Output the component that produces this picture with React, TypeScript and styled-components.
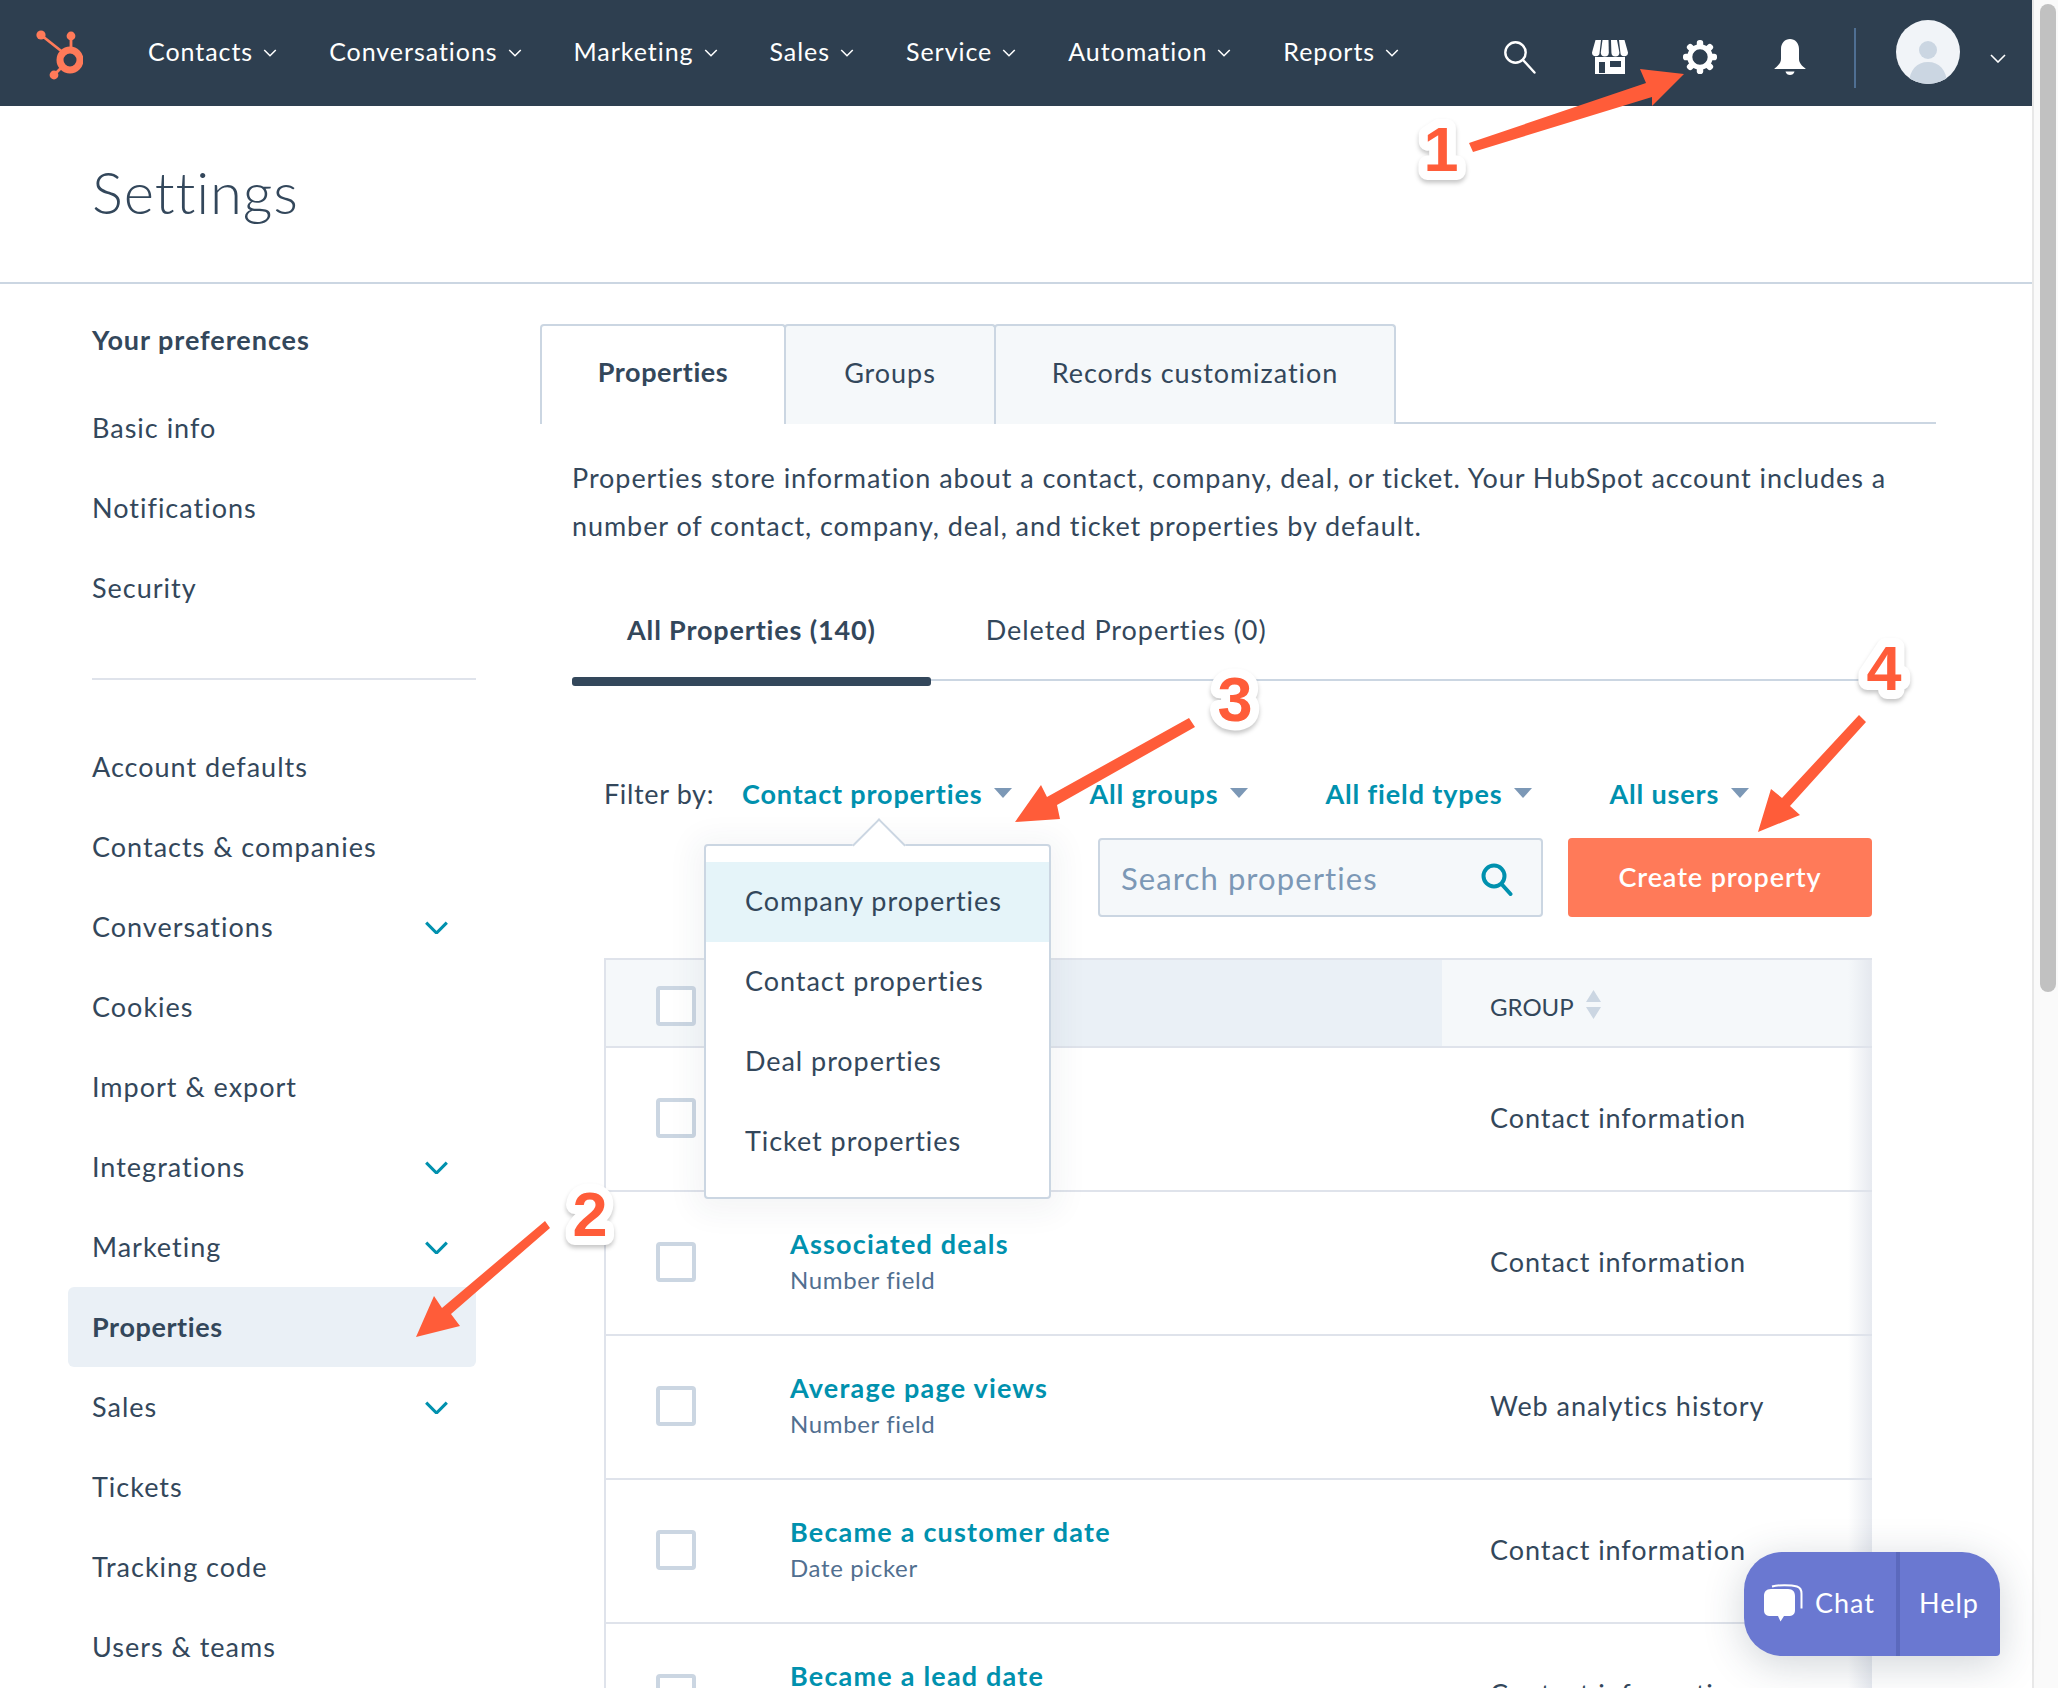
import { createGlobalStyle, styled } from 'styled-components';

const FONT = `Lato, "Noto Sans", "Liberation Sans", sans-serif`;
const INK = '#33475b';
const TEAL = '#0091ae';
const LINE = '#cbd6e2';
const SOFT_LINE = '#dfe3eb';

const GlobalStyle = createGlobalStyle`
  html, body { margin: 0; padding: 0; background: #fff; }
  body { font-family: ${FONT}; color: ${INK}; font-size: 27px; letter-spacing: 0.95px; }
  * { box-sizing: border-box; }
`;

const Page = styled.div`
  position: relative;
  display: flex;
  width: 2058px;
  height: 1688px;
  overflow: hidden;
`;

const Main = styled.div`
  flex: 0 0 2032px;
  display: flex;
  flex-direction: column;
`;

const ScrollTrack = styled.div`
  flex: 1;
  background: #fafafa;
  border-left: 2px solid #e8e8e8;
  padding: 4px 2px 0 6px;
`;

const ScrollThumb = styled.div`
  height: 988px;
  border-radius: 8px;
  background: #c1c1c1;
`;

const TopBar = styled.header`
  flex: 0 0 106px;
  display: flex;
  align-items: center;
  padding: 0 26px 0 36px;
  background: #2e3f50;
  color: #fff;
`;

const Logo = styled.svg`
  flex: none;
  width: 47px;
  height: 50px;
  margin: 4px 65px 0 0;
`;

const TopLinks = styled.nav`
  display: flex;
  gap: 52px;
  margin-bottom: 5px;
`;

const TopLink = styled.a`
  display: flex;
  align-items: center;
  gap: 10px;
  font-size: 25px;
  letter-spacing: 0.95px;
  svg {
    margin-top: 5px;
  }
`;

const TopRight = styled.div`
  display: flex;
  align-items: center;
  margin-left: auto;
`;

const IconSlot = styled.div`
  width: 90px;
  display: flex;
  justify-content: center;
  margin-top: 8px;
`;

const TopDivider = styled.div`
  width: 2px;
  height: 60px;
  margin: 10px 40px 0 19px;
  background: #4f6f93;
`;

const Avatar = styled.svg`
  width: 64px;
  height: 64px;
  margin-bottom: 2px;
`;

const AvatarCaret = styled.svg`
  width: 16px;
  height: 9px;
  margin: 10px 0 0 30px;
`;

const TitleBar = styled.div`
  flex: 0 0 178px;
  display: flex;
  align-items: center;
  padding: 0 0 5px 92px;
  border-bottom: 2px solid ${LINE};
`;

const Title = styled.h1`
  margin: 0;
  font-size: 58px;
  font-weight: 300;
  letter-spacing: 0.9px;
`;

const Body = styled.div`
  flex: 1;
  display: flex;
  min-height: 0;
`;

const Sidebar = styled.aside`
  flex: 0 0 540px;
  padding: 16px 64px 0 68px;
`;

const SideHeading = styled.div`
  height: 80px;
  line-height: 80px;
  padding-left: 24px;
  font-weight: 700;
  margin-bottom: 8px;
`;

const SideItem = styled.div<{ $active?: boolean }>`
  display: flex;
  align-items: center;
  justify-content: space-between;
  height: 80px;
  padding: 0 27px 1px 24px;
  border-radius: 6px;
  background: ${p => (p.$active ? '#eaf0f6' : 'transparent')};
  font-weight: ${p => (p.$active ? 700 : 400)};
  letter-spacing: ${p => (p.$active ? 0.6 : 1)}px;
  svg {
    margin-top: 2px;
  }
`;

const SideRule = styled.div`
  height: 2px;
  margin: 50px 0 47px 24px;
  background: ${SOFT_LINE};
`;

const Content = styled.main`
  flex: 0 0 1396px;
  padding-top: 40px;
`;

const Tabs = styled.div`
  display: flex;
  height: 100px;
  border-bottom: 2px solid ${LINE};
`;

const Tab = styled.div<{ $active?: boolean; $width: number }>`
  width: ${p => p.$width}px;
  height: 100px;
  display: flex;
  align-items: center;
  justify-content: center;
  padding-bottom: ${p => (p.$active ? 7 : 6)}px;
  margin-right: -2px;
  border: 2px solid ${LINE};
  border-bottom: 0;
  border-radius: 4px 4px 0 0;
  background: ${p => (p.$active ? '#fff' : '#f5f8fa')};
  font-weight: ${p => (p.$active ? 700 : 400)};
  letter-spacing: ${p => (p.$active ? 0.6 : 0.95)}px;
  position: relative;
  z-index: ${p => (p.$active ? 1 : 0)};
`;

const Panel = styled.div`
  padding: 30px 0 0 32px;
`;

const Intro = styled.p`
  margin: 0;
  line-height: 48px;
  width: 1340px;
  letter-spacing: 0.93px;
`;

const SubTabs = styled.div`
  display: flex;
  margin: 40px 32px 0 0;
  height: 91px;
  border-bottom: 2px solid ${LINE};
`;

const SubTab = styled.div<{ $active?: boolean }>`
  position: relative;
  height: 91px;
  line-height: 48px;
  padding: 16px 55px 0;
  font-weight: ${p => (p.$active ? 700 : 400)};
  letter-spacing: ${p => (p.$active ? 0.85 : 0.95)}px;
  &::after {
    content: '';
    display: ${p => (p.$active ? 'block' : 'none')};
    position: absolute;
    left: 0;
    right: 0;
    bottom: -5px;
    height: 9px;
    border-radius: 3px;
    background: #33475b;
  }
`;

const Filters = styled.div`
  display: flex;
  align-items: center;
  gap: 77px;
  height: 48px;
  margin: 88px 0 0 32px;
`;

const FilterLabel = styled.span`
  margin-right: -49px;
  letter-spacing: 0.65px;
`;

const FilterButton = styled.span`
  display: flex;
  align-items: center;
  gap: 12px;
  color: ${TEAL};
  font-weight: 700;
  letter-spacing: 0.85px;
`;

const Caret = styled.i`
  width: 0;
  height: 0;
  border-left: 9px solid transparent;
  border-right: 9px solid transparent;
  border-top: 10px solid #7c98b6;
`;

const Actions = styled.div`
  display: flex;
  justify-content: flex-end;
  gap: 25px;
  margin: 21px 64px 0 0;
`;

const SearchBox = styled.div`
  width: 445px;
  height: 79px;
  display: flex;
  align-items: center;
  justify-content: space-between;
  padding: 0 28px 0 21px;
  border: 2px solid ${LINE};
  border-radius: 4px;
  background: #f5f8fa;
  color: #7c98b6;
  font-size: 31px;
  letter-spacing: 1.1px;
  svg {
    margin-top: 3px;
  }
`;

const CreateButton = styled.button`
  width: 304px;
  height: 79px;
  padding: 0 0 3px;
  border: 0;
  border-radius: 4px;
  background: #ff7a59;
  color: #fff;
  font: 600 27px ${FONT};
  letter-spacing: 0.9px;
`;

const Table = styled.div`
  position: relative;
  margin: 41px 64px 0 32px;
  border-left: 2px solid ${SOFT_LINE};
  border-top: 2px solid ${SOFT_LINE};
  &::after {
    content: '';
    position: absolute;
    top: 0;
    bottom: 0;
    right: 0;
    width: 24px;
    background: linear-gradient(to right, rgba(223, 227, 235, 0), rgba(223, 227, 235, 0.75));
  }
`;

const Row = styled.div<{ $header?: boolean }>`
  display: grid;
  grid-template-columns: 164px 672px 429px;
  height: ${p => (p.$header ? 88 : 144)}px;
  border-bottom: 2px solid ${SOFT_LINE};
`;

const CheckCell = styled.div<{ $header?: boolean }>`
  display: flex;
  align-items: center;
  padding: ${p => (p.$header ? '5px 0 0' : '0 0 2px')} 50px;
  background: ${p => (p.$header ? '#f5f8fa' : 'transparent')};
`;

const Checkbox = styled.div`
  width: 40px;
  height: 40px;
  border: 4px solid ${LINE};
  border-radius: 4px;
  background: #fff;
`;

const NameHead = styled.div`
  background: #eaf0f6;
`;

const NameCell = styled.div`
  display: flex;
  flex-direction: column;
  justify-content: center;
  padding: 0 0 4px 20px;
`;

const PropName = styled.a`
  line-height: 36px;
  color: ${TEAL};
  font-weight: 700;
  letter-spacing: 1.2px;
`;

const PropType = styled.span`
  line-height: 35px;
  font-size: 24px;
  letter-spacing: 0.65px;
  color: #516f90;
`;

const GroupHead = styled.div`
  display: flex;
  align-items: center;
  gap: 12px;
  padding: 7px 0 0 48px;
  background: #f5f8fa;
  font-size: 24px;
  letter-spacing: 0;
`;

const GroupCell = styled.div`
  display: flex;
  align-items: center;
  padding: 0 0 3px 48px;
`;

const SortArrows = styled.svg`
  width: 15px;
  height: 29px;
  margin-bottom: 4px;
`;

const Dropdown = styled.div`
  position: absolute;
  z-index: 5;
  left: 704px;
  top: 844px;
  width: 347px;
  height: 355px;
  padding-top: 16px;
  border: 2px solid ${LINE};
  border-radius: 4px;
  background: #fff;
  box-shadow: 0 4px 30px 10px rgba(45, 62, 80, 0.05);
  &::before {
    content: '';
    position: absolute;
    left: 154px;
    top: -20px;
    width: 36px;
    height: 36px;
    transform: rotate(45deg);
    background: #fff;
    border-top: 2px solid ${LINE};
    border-left: 2px solid ${LINE};
  }
`;

const DropdownItem = styled.div<{ $active?: boolean }>`
  position: relative;
  display: flex;
  align-items: center;
  height: 80px;
  padding: 0 0 3px 39px;
  background: ${p => (p.$active ? '#e5f4f9' : 'transparent')};
`;

const ChatWidget = styled.div`
  position: absolute;
  z-index: 6;
  left: 1744px;
  top: 1552px;
  width: 256px;
  height: 104px;
  display: flex;
  border-radius: 38px 38px 4px 38px;
  background: #6a78d1;
  color: #fff;
  box-shadow: 0 8px 40px rgba(45, 62, 80, 0.22);
  font-size: 27px;
  letter-spacing: 1px;
`;

const ChatPart = styled.div`
  flex: 0 0 152px;
  display: flex;
  align-items: center;
  gap: 12px;
  padding: 0 0 3px 20px;
`;

const HelpPart = styled.div`
  flex: 1;
  display: flex;
  align-items: center;
  padding: 0 0 3px 19px;
  border-left: 4px solid #5b69bd;
`;

const ChatIcon = styled.svg`
  width: 39px;
  height: 38px;
`;

const Annotations = styled.svg`
  position: absolute;
  z-index: 10;
  left: 0;
  top: 0;
  width: 2058px;
  height: 1688px;
  pointer-events: none;
`;

const StepNumber = styled.text`
  font: 700 63px 'Liberation Sans', Arial, sans-serif;
  letter-spacing: 0;
  fill: #ff5c39;
  stroke: #fff;
  stroke-width: 18px;
  stroke-linejoin: round;
  paint-order: stroke fill;
  text-anchor: middle;
  filter: drop-shadow(0 3px 2px rgba(0, 0, 0, 0.22));
`;

const topLinks = ['Contacts', 'Conversations', 'Marketing', 'Sales', 'Service', 'Automation', 'Reports'];
const prefs = ['Basic info', 'Notifications', 'Security'];
const account: [string, boolean?][] = [
  ['Account defaults'],
  ['Contacts & companies'],
  ['Conversations', true],
  ['Cookies'],
  ['Import & export'],
  ['Integrations', true],
  ['Marketing', true],
];
const accountRest: [string, boolean?][] = [
  ['Sales', true],
  ['Tickets'],
  ['Tracking code'],
  ['Users & teams'],
];
const rows = [
  { name: '', type: '', group: 'Contact information' },
  { name: 'Associated deals', type: 'Number field', group: 'Contact information' },
  { name: 'Average page views', type: 'Number field', group: 'Web analytics history' },
  { name: 'Became a customer date', type: 'Date picker', group: 'Contact information' },
  { name: 'Became a lead date', type: 'Date picker', group: 'Contact information' },
];
const arrows = [
  '1469,143 1646,83 1640,69 1684,74 1652,106 1652,97 1473,152',
  '545,1221 442,1308 434,1296 416,1337 460,1326 451,1314 550,1228',
  '1189,718 1047,797 1041,785 1015,822 1060,819 1057,805 1195,727',
  '1859,715 1782,798 1771,789 1758,832 1800,815 1790,806 1866,722',
];
const steps = [
  { n: 1, x: 1441, y: 171 },
  { n: 2, x: 590, y: 1236 },
  { n: 3, x: 1235, y: 721 },
  { n: 4, x: 1884, y: 690 },
];

const Chevron = ({ size = 14, weight = 1.6, color = '#fff' }: { size?: number; weight?: number; color?: string }) => (
  <svg width={size} height={size * 0.55} viewBox="0 0 14 8" fill="none" stroke={color} strokeWidth={weight} style={{ flex: 'none' }}>
    <path d="M1 1l6 6 6-6" />
  </svg>
);

const Gear = () => (
  <svg width="34" height="34" viewBox="0 0 34 34" fill="#fff">
    <circle cx="17" cy="17" r="10.2" fill="none" stroke="#fff" strokeWidth="5" />
    {[0, 45, 90, 135, 180, 225, 270, 315].map(a => (
      <rect key={a} x="13.8" y="0" width="6.4" height="9" rx="2.8" transform={`rotate(${a} 17 17)`} />
    ))}
  </svg>
);

export default function App() {
  return (
    <Page>
      <GlobalStyle />
      <Main>
        <TopBar>
          <Logo viewBox="0 0 47 50" fill="#ff7a59" stroke="#ff7a59">
            <circle cx="5" cy="5" r="4.6" stroke="none" />
            <circle cx="35" cy="6" r="4.4" stroke="none" />
            <circle cx="18" cy="45" r="4.4" stroke="none" />
            <path d="M5 5l24 19M35 6v12M18 45l9-9" strokeWidth="2.8" />
            <circle cx="34" cy="30" r="10" fill="none" strokeWidth="7" />
          </Logo>
          <TopLinks>
            {topLinks.map(link => (
              <TopLink key={link}>
                {link}
                <Chevron />
              </TopLink>
            ))}
          </TopLinks>
          <TopRight>
            <IconSlot>
              <svg width="32" height="33" viewBox="0 0 32 33" fill="none" stroke="#fff" strokeWidth="2.4" strokeLinecap="round">
                <circle cx="11.5" cy="11.5" r="10.2" />
                <path d="M19 19l11.5 12.5" />
              </svg>
            </IconSlot>
            <IconSlot>
              <svg width="36" height="34" viewBox="0 0 36 34" fill="#fff">
                <path d="M3.5 0H9L7.6 12.5a3.8 3.8 0 0 1-7.6 0Z" />
                <path d="M10.5 0h6l.3 12.5a4 4 0 0 1-8 0Z" />
                <path d="M19 0h6l2.4 12.5a4 4 0 0 1-8 0Z" />
                <path d="M27 0h5.5L36 12.5a3.8 3.8 0 0 1-7.6 0Z" />
                <path fillRule="evenodd" d="M3 17h30v17H3ZM7 22v11h6V22ZM18 21v6h11v-6Z" />
              </svg>
            </IconSlot>
            <IconSlot>
              <Gear />
            </IconSlot>
            <IconSlot>
              <svg width="32" height="36" viewBox="0 0 32 36" fill="#fff">
                <path d="M16 0c5 0 9 4 9 10v10c0 4 3 7 6.5 9.5v.5H.5v-.5C4 27 7 24 7 20V10C7 4 11 0 16 0Z" />
                <path d="M11.5 32.5h9c-.5 2.500-2.500 3.500-4.500 3.500s-4-1-4.500-3.500Z" />
              </svg>
            </IconSlot>
            <TopDivider />
            <Avatar viewBox="0 0 64 64">
              <defs>
                <clipPath id="avatar-clip">
                  <circle cx="32" cy="32" r="32" />
                </clipPath>
              </defs>
              <circle cx="32" cy="32" r="32" fill="#f1f4f8" />
              <circle cx="32" cy="30" r="9" fill={LINE} />
              <path clipPath="url(#avatar-clip)" fill={LINE} d="M13 64c0-14 8-22 19-22s19 8 19 22Z" />
            </Avatar>
            <AvatarCaret viewBox="0 0 16 9" fill="none" stroke="#fff" strokeWidth="1.6">
              <path d="M1 1l7 7 7-7" />
            </AvatarCaret>
          </TopRight>
        </TopBar>
        <TitleBar>
          <Title>Settings</Title>
        </TitleBar>
        <Body>
          <Sidebar>
            <SideHeading>Your preferences</SideHeading>
            {prefs.map(p => (
              <SideItem key={p}>{p}</SideItem>
            ))}
            <SideRule />
            {account.map(([label, more]) => (
              <SideItem key={label}>
                {label}
                {more && <Chevron size={25} weight={1.8} color={TEAL} />}
              </SideItem>
            ))}
            <SideItem $active>Properties</SideItem>
            {accountRest.map(([label, more]) => (
              <SideItem key={label}>
                {label}
                {more && <Chevron size={25} weight={1.8} color={TEAL} />}
              </SideItem>
            ))}
          </Sidebar>
          <Content>
            <Tabs>
              <Tab $active $width={246}>Properties</Tab>
              <Tab $width={212}>Groups</Tab>
              <Tab $width={402}>Records customization</Tab>
            </Tabs>
            <Panel>
              <Intro>
                Properties store information about a contact, company, deal, or ticket. Your HubSpot account includes a
                number of contact, company, deal, and ticket properties by default.
              </Intro>
              <SubTabs>
                <SubTab $active>All Properties (140)</SubTab>
                <SubTab>Deleted Properties (0)</SubTab>
              </SubTabs>
              <Filters>
                <FilterLabel>Filter by:</FilterLabel>
                {['Contact properties', 'All groups', 'All field types', 'All users'].map(f => (
                  <FilterButton key={f}>
                    {f}
                    <Caret />
                  </FilterButton>
                ))}
              </Filters>
              <Actions>
                <SearchBox>
                  Search properties
                  <svg width="32" height="33" viewBox="0 0 32 33" fill="none" stroke={TEAL} strokeWidth="4" strokeLinecap="round">
                    <circle cx="13" cy="13" r="10.500" />
                    <path d="M20.500 21l9 10" />
                  </svg>
                </SearchBox>
                <CreateButton>Create property</CreateButton>
              </Actions>
              <Table>
                <Row $header>
                  <CheckCell $header>
                    <Checkbox />
                  </CheckCell>
                  <NameHead />
                  <GroupHead>
                    GROUP
                    <SortArrows viewBox="0 0 15 29" fill={LINE}>
                      <path d="M7.500 0L15 12H0ZM0 17h15L7.500 29Z" />
                    </SortArrows>
                  </GroupHead>
                </Row>
                {rows.map((r, i) => (
                  <Row key={i}>
                    <CheckCell>
                      <Checkbox />
                    </CheckCell>
                    <NameCell>
                      <PropName>{r.name}</PropName>
                      <PropType>{r.type}</PropType>
                    </NameCell>
                    <GroupCell>{r.group}</GroupCell>
                  </Row>
                ))}
              </Table>
            </Panel>
          </Content>
        </Body>
      </Main>
      <ScrollTrack>
        <ScrollThumb />
      </ScrollTrack>
      <Dropdown>
        <DropdownItem $active>Company properties</DropdownItem>
        <DropdownItem>Contact properties</DropdownItem>
        <DropdownItem>Deal properties</DropdownItem>
        <DropdownItem>Ticket properties</DropdownItem>
      </Dropdown>
      <ChatWidget>
        <ChatPart>
          <ChatIcon viewBox="0 0 39 38">
            <path fill="#fff" d="M7 5h17c5 0 7 3 7 7v14c0 4-2 6-7 6h-4l-3.500 5.500L14 32H7c-5 0-7-2-7-6V12c0-4 2-7 7-7Z" />
            <path fill="none" stroke="#fff" strokeWidth="2" d="M8 2.500C14 .8 27 .8 33 2.500c3 1 4.500 3 4.500 7v15" />
          </ChatIcon>
          Chat
        </ChatPart>
        <HelpPart>Help</HelpPart>
      </ChatWidget>
      <Annotations viewBox="0 0 2058 1688">
        {arrows.map(points => (
          <polygon key={points} points={points} fill="#ff5c39" />
        ))}
        {steps.map(s => (
          <StepNumber key={s.n} x={s.x} y={s.y}>
            {s.n}
          </StepNumber>
        ))}
      </Annotations>
    </Page>
  );
}
